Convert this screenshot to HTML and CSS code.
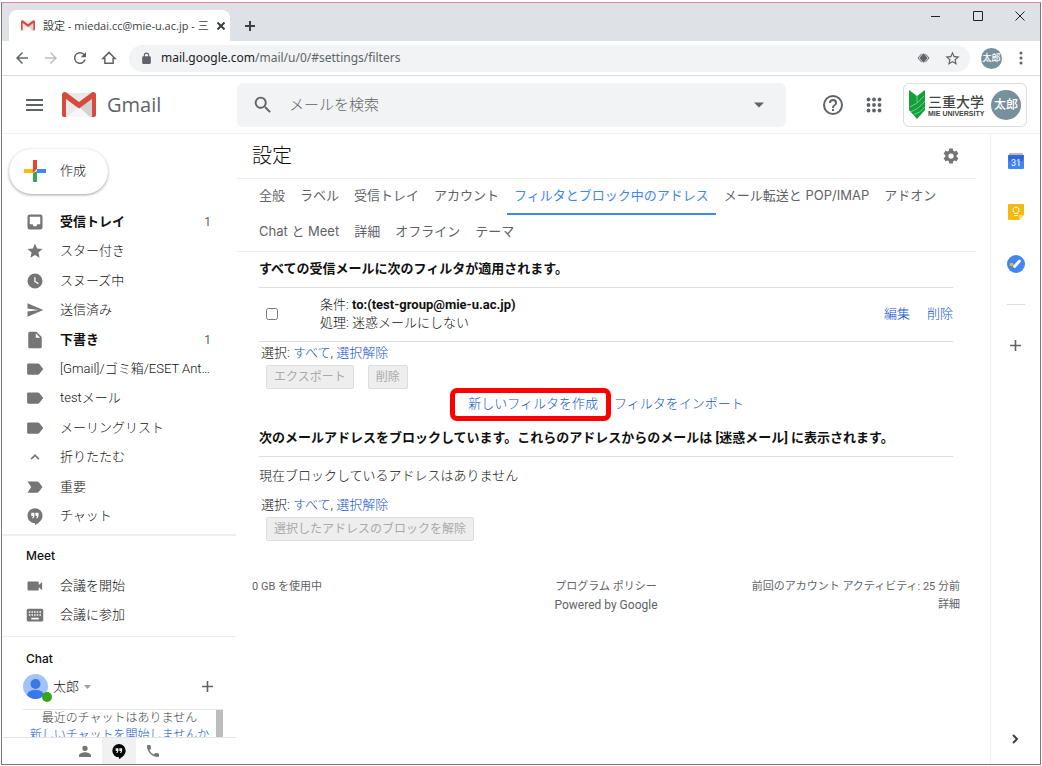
FILE: index.html
```html
<!DOCTYPE html>
<html lang="ja">
<head>
    <meta charset="UTF-8">
    <title>設定 - miedai.cc@mie-u.ac.jp</title>
    <link rel="stylesheet" href="styles.css">
</head>
<body>
<svg class="sprite" aria-hidden="true">
    <symbol id="i-label" viewBox="0 0 24 24"><path d="M3 4.500h13q1 0 1.700.9L23 12l-5.300 6.600q-.7.900-1.700.900H3Q1.500 19.500 1.500 18V6Q1.500 4.500 3 4.500z"/></symbol>
    <symbol id="i-hangout" viewBox="0 0 24 24"><path d="M12 1.500a10 10 0 0 0 0 20V24c5-2.500 10-7 10-12.500a10 10 0 0 0-10-10zM11.200 12l-1.500 3H8l1.300-3H7V7.800h4.200zm5.500 0l-1.500 3h-1.700l1.300-3h-2.300V7.800h4.200z"/></symbol>
    <symbol id="i-mail" viewBox="0 0 34 26">
        <path fill="#e9e9e9" d="M3 1h28v24H3z"/>
        <path fill="#f7f7f7" d="M5 25l12-11 12 11z"/>
        <path fill="#d3d3d3" d="M31 7v18h-3L17 15z"/>
        <path fill="#d54b3d" d="M0 3q0-3 3-3 1 0 2 1l12 9L29 1q1-1 2-1 3 0 3 3v20q0 2-2 2h-2V7L17 16.500 4 7v18H2q-2 0-2-2z"/>
    </symbol>
</svg>

<div class="window">
    <div class="tabstrip">
        <div class="browser-tab">
            <svg class="fav"><use href="#i-mail"/></svg>
            <span class="tab-title">設定 - miedai.cc@mie-u.ac.jp - 三</span>
            <button aria-label="閉じる"><svg width="8" height="8" viewBox="0 0 8 8"><path class="line2" d="M.5.500l7 7M7.500.500l-7 7"/></svg></button>
        </div>
        <button class="new-tab" aria-label="新しいタブ"><svg width="12" height="12" viewBox="0 0 12 12"><path class="line2" d="M6 1v10M1 6h10"/></svg></button>
        <div class="win-buttons">
            <button aria-label="最小化"><svg width="10" height="10" viewBox="0 0 10 10"><path class="line1" d="M0 5.500h9"/></svg></button>
            <button aria-label="最大化"><svg width="10" height="10" viewBox="0 0 10 10"><path class="line1" d="M.5.500h9v9h-9z"/></svg></button>
            <button aria-label="閉じる"><svg width="10" height="10" viewBox="0 0 10 10"><path class="line1" d="M.5.500l9 9M9.500.500l-9 9"/></svg></button>
        </div>
    </div>

    <div class="toolbar">
        <button aria-label="戻る"><svg width="18" height="18" viewBox="0 0 24 24"><path d="M20 11H7.800l5.600-5.600L12 4l-8 8 8 8 1.400-1.400L7.800 13H20z"/></svg></button>
        <button class="off" aria-label="進む"><svg width="18" height="18" viewBox="0 0 24 24"><path d="M12 4l-1.400 1.400 5.600 5.600H4v2h12.200l-5.600 5.600L12 20l8-8z"/></svg></button>
        <button aria-label="再読み込み"><svg width="18" height="18" viewBox="0 0 24 24"><path d="M17.650 6.350A8 8 0 1 0 19.730 14h-2.080A6 6 0 1 1 12 6c1.660 0 3.140.690 4.220 1.780L13 11h7V4z"/></svg></button>
        <button aria-label="ホーム"><svg width="18" height="18" viewBox="0 0 24 24"><path class="outline" d="M4 12.500l8-8 8 8h-2.500V19h-11v-6.500z"/></svg></button>
        <div class="omnibox">
            <svg width="13" height="13" viewBox="0 0 24 24"><path d="M18 8h-1V6A5 5 0 0 0 7 6v2H6a2 2 0 0 0-2 2v10c0 1.100.9 2 2 2h12a2 2 0 0 0 2-2V10a2 2 0 0 0-2-2zM9 6a3 3 0 0 1 6 0v2H9z"/></svg>
            <span class="url"><b>mail.google.com</b>/mail/u/0/#settings/filters</span>
            <svg width="13" height="12" viewBox="0 0 14 12"><path class="outline thin" d="M5 1.500L1 6l4 4.500M9 1.500L13 6l-4 4.500"/><path d="M7 1l4.500 5L7 11 2.500 6z"/></svg>
            <svg class="fav-star" width="17" height="17" viewBox="0 0 24 24"><path d="M22 9.240l-7.190-.620L12 2 9.190 8.630 2 9.240l5.460 4.730L5.820 21 12 17.270 18.180 21l-1.630-7.030zM12 15.400l-3.760 2.270 1-4.280-3.320-2.880 4.380-.380L12 6.100l1.710 4.040 4.380.380-3.320 2.880 1 4.280z"/></svg>
        </div>
        <span class="profile small">太郎</span>
        <button aria-label="メニュー"><svg width="16" height="16" viewBox="0 0 16 16"><circle cx="8" cy="3" r="1.500"/><circle cx="8" cy="8" r="1.500"/><circle cx="8" cy="13" r="1.500"/></svg></button>
    </div>

    <header class="gheader">
        <button class="burger" aria-label="メインメニュー"><svg width="18" height="12" viewBox="0 0 18 12"><path d="M0 0h17v2H0zM0 5h17v2H0zM0 10h17v2H0z"/></svg></button>
        <a class="logo" href="#"><svg width="34" height="26"><use href="#i-mail"/></svg><span>Gmail</span></a>
        <form class="search">
            <svg width="22" height="22" viewBox="0 0 24 24"><path d="M15.500 14h-.790l-.280-.270A6.500 6.500 0 1 0 13.730 14.430l.270.280v.790l5 4.990L20.490 19zM9.500 14a4.500 4.500 0 1 1 0-9 4.500 4.500 0 0 1 0 9z"/></svg>
            <input type="text" placeholder="メールを検索" aria-label="メールを検索">
            <svg width="10" height="6" viewBox="0 0 10 6"><path d="M0 .500h10L5 5.500z"/></svg>
        </form>
        <button class="help" aria-label="ヘルプ"><svg width="24" height="24" viewBox="0 0 24 24"><path d="M11 18h2v-2h-2zM12 2a10 10 0 1 0 0 20 10 10 0 0 0 0-20zm0 18a8 8 0 1 1 0-16 8 8 0 0 1 0 16zm0-14a4 4 0 0 0-4 4h2a2 2 0 1 1 4 0c0 2-3 1.750-3 5h2c0-2.250 3-2.500 3-5a4 4 0 0 0-4-4z"/></svg></button>
        <button class="apps" aria-label="アプリ"><svg width="16" height="16" viewBox="0 0 16 16"><circle cx="2.500" cy="2.500" r="1.900"/><circle cx="8" cy="2.500" r="1.900"/><circle cx="13.500" cy="2.500" r="1.900"/><circle cx="2.500" cy="8" r="1.900"/><circle cx="8" cy="8" r="1.900"/><circle cx="13.500" cy="8" r="1.900"/><circle cx="2.500" cy="13.500" r="1.900"/><circle cx="8" cy="13.500" r="1.900"/><circle cx="13.500" cy="13.500" r="1.900"/></svg></button>
        <div class="org">
            <svg width="17" height="29" viewBox="0 0 17 29"><path fill="#12a038" d="M0 0l8 6 8-6v20l-8 9-8-9z"/><path stroke="#a5dbb2" fill="none" stroke-width=".7" d="M1 17Q9 14 15 6M1 22Q10 19 16 11M4 25q7-2 12-8M8 6v6"/></svg>
            <div class="org-name"><strong>三重大学</strong><small>MIE UNIVERSITY</small></div>
            <span class="profile">太郎</span>
        </div>
    </header>

    <div class="page">
        <nav class="sidebar">
            <button class="compose">
                <svg width="22" height="22" viewBox="0 0 22 22"><path fill="#ea4335" d="M9 0h4v9l-4 4z"/><path fill="#fbbc04" d="M0 9h9v4H0z"/><path fill="#34a853" d="M9 13l4-2v11H9z"/><path fill="#4285f4" d="M13 9h9v4h-9z"/></svg>
                作成
            </button>
            <ul class="folders">
                <li><a class="unread" href="#"><svg viewBox="0 0 24 24"><path d="M19 2H5a3 3 0 0 0-3 3v14a3 3 0 0 0 3 3h14a3 3 0 0 0 3-3V5a3 3 0 0 0-3-3zm0 13h-4a3 3 0 0 1-6 0H5V5h14z"/></svg><span>受信トレイ</span><i>1</i></a></li>
                <li><a href="#"><svg viewBox="0 0 24 24"><path d="M12 17.270L18.180 21l-1.640-7.030L22 9.240l-7.190-.610L12 2 9.190 8.630 2 9.240l5.460 4.730L5.820 21z"/></svg><span>スター付き</span></a></li>
                <li><a href="#"><svg viewBox="0 0 24 24"><path d="M12 2a10 10 0 1 0 0 20 10 10 0 0 0 0-20zm4.200 14.200L11 13V7h1.700v5.200l4.300 2.600z"/></svg><span>スヌーズ中</span></a></li>
                <li><a href="#"><svg viewBox="0 0 24 24"><path d="M2 21l21-9L2 3v7l15 2-15 2z"/></svg><span>送信済み</span></a></li>
                <li><a class="unread" href="#"><svg viewBox="0 0 24 24"><path d="M5 1a2 2 0 0 0-2 2v18c0 1.100.9 2 2 2h14a2 2 0 0 0 2-2V8l-7-7zm8 8V3l6 6z"/></svg><span>下書き</span><i>1</i></a></li>
                <li><a href="#"><svg><use href="#i-label"/></svg><span>[Gmail]/ゴミ箱/ESET Antispam</span></a></li>
                <li><a href="#"><svg><use href="#i-label"/></svg><span>testメール</span></a></li>
                <li><a href="#"><svg><use href="#i-label"/></svg><span>メーリングリスト</span></a></li>
                <li><a href="#"><svg viewBox="0 0 24 24"><path fill="#777" d="M12 8l-6 6 1.600 1.600 4.400-4.400 4.400 4.400L18 14z"/></svg><span>折りたたむ</span></a></li>
                <li><a href="#"><svg viewBox="0 0 24 24"><path d="M2 4.500h13q1 0 1.800.9L22 12l-5.200 6.600q-.8.900-1.800.9H2L7 12z"/></svg><span>重要</span></a></li>
                <li><a href="#"><svg><use href="#i-hangout"/></svg><span>チャット</span></a></li>
            </ul>
            <section class="meet">
                <h2>Meet</h2>
                <a href="#"><svg viewBox="0 0 24 24"><path d="M17 10.500V7a1 1 0 0 0-1-1H3a1 1 0 0 0-1 1v10c0 .550.450 1 1 1h13a1 1 0 0 0 1-1v-3.500l4.500 4v-11z"/></svg><span>会議を開始</span></a>
                <a href="#"><svg viewBox="0 0 24 24"><path d="M21 3.500H3a2 2 0 0 0-2 2v13c0 1.100.9 2 2 2h18a2 2 0 0 0 2-2v-13a2 2 0 0 0-2-2zM10.800 7h2v2h-2zm0 4h2v2h-2zM7.300 7h2v2h-2zm0 4h2v2h-2zm-1.500 2h-2v-2h2zm0-4h-2V7h2zM17 18H7v-2.500h10zm-.7-5h-2v-2h2zm0-4h-2V7h2zm3.700 4h-2v-2h2zm0-4h-2V7h2z"/></svg><span>会議に参加</span></a>
            </section>
            <section class="chat">
                <h2>Chat</h2>
                <div class="me">
                    <div class="avatar">
                        <svg width="25" height="25" viewBox="0 0 25 25"><circle cx="12.500" cy="12.500" r="12.500" fill="#a1c2fa"/><circle cx="12.500" cy="10" r="5" fill="#3b78e7"/><path fill="#3b78e7" d="M4 21q1-5 8.500-5t8.500 5q-3.500 4-8.500 4T4 21z"/></svg>
                        <span class="online"></span>
                    </div>
                    太郎
                    <svg class="caret" width="7" height="4" viewBox="0 0 7 4"><path d="M0 0h7L3.500 4z"/></svg>
                    <button aria-label="チャットを開始"><svg width="11" height="11" viewBox="0 0 11 11"><path d="M4.700 0h1.600v4.700H11v1.600H6.300V11H4.700V6.300H0V4.700h4.700z"/></svg></button>
                </div>
                <div class="chat-list">
                    <div>最近のチャットはありません<a href="#">新しいチャットを開始しませんか</a></div>
                    <span class="thumb"></span>
                </div>
            </section>
            <div class="chat-tabs">
                <button aria-label="連絡先"><svg viewBox="0 0 24 24"><path d="M12 12a4 4 0 1 0 0-8 4 4 0 0 0 0 8zm0 2c-3 0-9 1.500-9 5v2h18v-2c0-3.500-6-5-9-5z"/></svg></button>
                <button class="on" aria-label="ハングアウト"><svg><use href="#i-hangout"/></svg></button>
                <button aria-label="電話"><svg viewBox="0 0 24 24"><path d="M6.620 10.790a15 15 0 0 0 6.590 6.590l2.200-2.200a1 1 0 0 1 1.020-.240c1.120.370 2.330.570 3.570.570.550 0 1 .450 1 1V20a1 1 0 0 1-1 1A17 17 0 0 1 3 4a1 1 0 0 1 1-1h3.500a1 1 0 0 1 1 1c0 1.250.2 2.450.570 3.570a1 1 0 0 1-.250 1.020z"/></svg></button>
            </div>
        </nav>

        <main>
            <div class="title-row">
                <h1>設定</h1>
                <button aria-label="設定"><svg width="18" height="18" viewBox="0 0 24 24"><path d="M19.430 12.980c.040-.320.070-.640.070-.980s-.030-.660-.070-.980l2.110-1.650a.5.500 0 0 0 .120-.640l-2-3.460a.5.500 0 0 0-.610-.220l-2.490 1a7.300 7.300 0 0 0-1.690-.980l-.380-2.650A.490.490 0 0 0 14 2h-4a.490.490 0 0 0-.490.420l-.380 2.650c-.610.250-1.170.590-1.690.980l-2.490-1a.49.490 0 0 0-.610.220l-2 3.460a.49.490 0 0 0 .120.640l2.110 1.650c-.040.320-.070.650-.070.980s.030.660.070.980l-2.110 1.650a.5.500 0 0 0-.120.640l2 3.460c.120.220.390.300.610.220l2.490-1c.52.400 1.080.730 1.690.980l.380 2.650c.030.240.240.420.490.420h4c.250 0 .460-.180.490-.420l.380-2.650a7.700 7.700 0 0 0 1.690-.980l2.490 1c.230.090.490 0 .610-.220l2-3.460a.5.500 0 0 0-.120-.640zM12 15.500a3.500 3.500 0 1 1 0-7 3.500 3.500 0 0 1 0 7z"/></svg></button>
            </div>
            <nav class="tabs">
                <a href="#">全般</a><a href="#">ラベル</a><a href="#">受信トレイ</a><a href="#">アカウント</a><a class="current" href="#">フィルタとブロック中のアドレス</a><a href="#">メール転送と POP/IMAP</a><a href="#">アドオン</a><a href="#">Chat と Meet</a><a href="#">詳細</a><a href="#">オフライン</a><a href="#">テーマ</a>
            </nav>

            <div class="settings">
                <h3>すべての受信メールに次のフィルタが適用されます。</h3>
                <table class="filters">
                    <tr>
                        <td class="check"><input type="checkbox" id="f1"></td>
                        <td><label for="f1">条件: <b>to:(test-group@mie-u.ac.jp)</b><br>処理: 迷惑メールにしない</label></td>
                        <td class="ops"><a href="#">編集</a><a href="#">削除</a></td>
                    </tr>
                </table>
                <p class="select">選択: <a href="#">すべて</a>, <a href="#">選択解除</a></p>
                <div class="buttons"><button disabled>エクスポート</button><button disabled>削除</button></div>
                <div class="create"><a class="marked" href="#">新しいフィルタを作成</a><a href="#">フィルタをインポート</a></div>
                <h3 class="blocked">次のメールアドレスをブロックしています。これらのアドレスからのメールは [迷惑メール] に表示されます。</h3>
                <p class="none">現在ブロックしているアドレスはありません</p>
                <p class="select">選択: <a href="#">すべて</a>, <a href="#">選択解除</a></p>
                <div class="buttons"><button disabled>選択したアドレスのブロックを解除</button></div>
            </div>

            <footer>
                <div>0 GB を使用中</div>
                <div class="center"><a href="#">プログラム ポリシー</a><p class="powered">Powered by Google</p></div>
                <div class="right">前回のアカウント アクティビティ: 25 分前<br><a href="#">詳細</a></div>
            </footer>
        </main>

        <aside>
            <a href="#" aria-label="カレンダー"><svg width="16" height="16" viewBox="0 0 16 16"><path fill="#bdbdbd" d="M1 0h14v3H1z"/><path fill="#4285f4" d="M0 3h16v12q0 1-1 1H1q-1 0-1-1z"/><path fill="#3367d6" d="M0 2h16l-1 6H1z"/><text x="8" y="13" text-anchor="middle">31</text></svg></a>
            <a href="#" aria-label="Keep"><svg width="16" height="16" viewBox="0 0 16 16"><path fill="#f5b912" d="M1 0h14q1 0 1 1v10l-5 5H1q-1 0-1-1V1q0-1 1-1z"/><path fill="#fdd663" d="M16 11l-5 5v-5z"/><path fill="none" stroke="#fff" d="M6.500 9.500V8.700a3 3 0 1 1 3 0v.8zM6.500 11.500h3"/></svg></a>
            <a href="#" aria-label="ToDo リスト"><svg width="18" height="18" viewBox="0 0 18 18"><circle cx="9" cy="9" r="9" fill="#4285f4"/><path stroke="#fff" stroke-width="2.800" stroke-linecap="round" d="M7.500 11.500l5-5.500"/><circle cx="4.500" cy="9.500" r="1.800" fill="#fbbc04"/></svg></a>
            <hr>
            <button aria-label="アドオンを取得"><svg width="11" height="11" viewBox="0 0 11 11"><path d="M4.700 0h1.600v4.700H11v1.600H6.300V11H4.700V6.300H0V4.700h4.700z"/></svg></button>
            <button class="hide" aria-label="サイドパネルを非表示"><svg width="8" height="10" viewBox="0 0 8 10"><path class="line2" d="M1 1l4 4-4 4"/></svg></button>
        </aside>
    </div>
</div>
</body>
</html>
```
FILE: styles.css
```css
* {
    margin: 0;
    padding: 0;
    box-sizing: border-box;
}

body {
    font: 13px/18px Roboto, "Noto Sans CJK JP", sans-serif;
    color: #111;
    background: #fff;
}

ul {
    list-style: none;
}

a {
    color: #15c;
    text-decoration: none;
}

b {
    font-weight: bold;
}

button {
    border: 0;
    background: none;
    font: inherit;
    color: inherit;
}

svg {
    display: block;
    flex: none;
    fill: #5f6368;
}

.sprite {
    position: absolute;
    width: 0;
    height: 0;
}

.line1, .line2, .outline {
    fill: none;
    stroke: #202124;
}

.line2 {
    stroke-width: 2;
    stroke: #3c4043;
}

.outline {
    stroke: #5f6368;
    stroke-width: 2;
}

.thin {
    stroke-width: 1;
}

.window {
    display: flex;
    flex-direction: column;
    min-height: calc(100vh - 3px);
    margin: 2px 1px 1px;
    border: 1px solid #777;
    border-top-color: #e8829c;
}

/* browser frame */
.tabstrip {
    display: flex;
    align-items: center;
    height: 38px;
    padding-left: 7px;
    background: #dee1e6;
}

.browser-tab {
    display: flex;
    align-items: center;
    align-self: flex-end;
    gap: 8px;
    width: 221px;
    height: 31px;
    padding: 0 11px 0 12px;
    border-radius: 8px 8px 0 0;
    background: #fff;
}

.fav {
    width: 14px;
    height: 11px;
}

.tab-title {
    flex: 1;
    white-space: nowrap;
    font: 11px/18px "Open Sans", "Noto Sans CJK JP", sans-serif;
    color: #3c4043;
}

.new-tab {
    margin: 8px 0 0 14px;
}

.win-buttons {
    display: flex;
    gap: 32px;
    margin: 0 15px 12px auto;
}

.toolbar {
    display: flex;
    align-items: center;
    gap: 11px;
    height: 35px;
    padding: 0 11px;
    border-bottom: 1px solid #dadce0;
}

.off {
    opacity: .4;
}

.omnibox {
    display: flex;
    flex: 1;
    align-items: center;
    gap: 8px;
    height: 27px;
    padding: 0 9px 0 11px;
    border-radius: 14px;
    background: #f1f3f4;
}

.url {
    flex: 1;
    font: 12px/18px "Noto Sans", sans-serif;
    color: #5f6368;
}

.url b {
    font-weight: normal;
    color: #202124;
}

.fav-star {
    margin-left: 6px;
}

.profile {
    display: grid;
    place-items: center;
    flex: none;
    width: 30px;
    height: 30px;
    border-radius: 50%;
    background: #78909c;
    color: #fff;
    font-size: 12px;
    font-weight: 500;
}

.profile.small {
    width: 21px;
    height: 21px;
    font-size: 9px;
}

/* gmail header */
.gheader {
    display: flex;
    align-items: center;
    height: 58px;
    padding: 0 13px 0 24px;
    border-bottom: 1px solid #f1f1f1;
}

.logo {
    display: flex;
    align-items: center;
    gap: 11px;
    width: 175px;
    margin-left: 18px;
    font: 20px/26px "Open Sans", sans-serif;
    color: #5f6368;
}

.search {
    display: flex;
    flex: 1;
    align-items: center;
    gap: 15px;
    height: 44px;
    padding: 0 22px 0 15px;
    border-radius: 6px;
    background: #f1f3f4;
}

.search input {
    flex: 1;
    min-width: 0;
    border: 0;
    background: none;
    font: 300 15px/24px Roboto, "Noto Sans CJK JP", sans-serif;
}

.search input::placeholder {
    color: #5f6368;
}

.help {
    margin-left: 35px;
}

.apps {
    margin: 0 21px;
}

.org {
    display: flex;
    align-items: center;
    height: 44px;
    padding: 0 5px;
    border: 1px solid #dadce0;
    border-radius: 6px;
}

.org-name {
    display: flex;
    flex-direction: column;
    width: 56px;
    margin: 0 7px 0 2px;
    white-space: nowrap;
    color: #444;
}

.org-name strong {
    font: 500 14px/18px "Noto Sans CJK JP", sans-serif;
}

.org-name small {
    font: bold 7px/8px "Liberation Sans", sans-serif;
}

.page {
    display: flex;
    flex: 1;
}

/* left column */
.sidebar {
    display: flex;
    flex-direction: column;
    width: 235px;
    padding-right: 1px;
    font-weight: 300;
}

.compose {
    display: flex;
    align-items: center;
    align-self: flex-start;
    gap: 14px;
    height: 45px;
    margin: 15px 0 0 7px;
    padding: 0 22px 1px 15px;
    border-radius: 23px;
    box-shadow: 0 1px 2px rgba(60, 64, 67, .3), 0 1px 3px 1px rgba(60, 64, 67, .15);
}

.folders {
    display: grid;
    grid-template-columns: minmax(0, 1fr);
    grid-auto-rows: 1fr;
    min-height: 324px;
    margin-top: 13px;
    padding-right: 25px;
}

.folders a, .meet a {
    display: flex;
    align-items: center;
    gap: 16px;
    height: 100%;
    padding-left: 24px;
    color: #111;
}

.folders svg, .meet svg {
    width: 18px;
    height: 18px;
    fill: #757575;
}

.folders span {
    flex: 1;
    overflow: hidden;
    white-space: nowrap;
    text-overflow: ellipsis;
}

.folders i {
    font: 12px/18px Roboto, sans-serif;
    color: #5f6368;
}

.folders .unread {
    font-weight: bold;
}

.sidebar h2 {
    padding-left: 24px;
    font: 500 12px/20px Inter, sans-serif;
}

.meet {
    margin-top: 3px;
    padding: 10px 0 7px;
    border-top: 2px solid #eee;
}

.meet h2 {
    margin-bottom: 5px;
}

.meet a {
    height: 29px;
}

.chat {
    display: flex;
    flex: 1;
    flex-direction: column;
    padding: 12px 13px 0 21px;
    border-top: 1px solid #eee;
}

.sidebar .chat h2 {
    padding-left: 3px;
}

.me {
    display: flex;
    align-items: center;
    gap: 5px;
    height: 41px;
    padding-bottom: 5px;
    border-bottom: 1px solid #e5e5e5;
}

.avatar {
    position: relative;
}

.online {
    position: absolute;
    right: -4px;
    bottom: -3px;
    width: 10px;
    height: 10px;
    border-radius: 50%;
    background: #34a51d;
}

.caret {
    opacity: .6;
}

.me button {
    margin: 0 10px 0 auto;
}

.chat-list {
    display: flex;
    height: 27px;
    overflow: hidden;
    line-height: 17px;
    color: #444;
}

.chat-list div {
    flex: 1;
    text-align: center;
    white-space: nowrap;
    font-size: 12px;
}

.chat-list a {
    display: block;
}

.thumb {
    width: 7px;
    background: #bdbdbd;
}

.chat-tabs {
    display: flex;
    justify-content: center;
    height: 27px;
    border-top: 1px solid #e5e5e5;
}

.chat-tabs button {
    display: grid;
    place-items: center;
    width: 34px;
}

.chat-tabs svg {
    width: 16px;
    height: 16px;
    fill: #757575;
}

.chat-tabs .on {
    background: #f1f1f1;
}

.chat-tabs .on svg {
    fill: #000;
}

/* settings */
main {
    flex: 1;
    padding-right: 14px;
    font-weight: 300;
}

.title-row {
    display: flex;
    align-items: center;
    justify-content: space-between;
    height: 45px;
    padding: 0 16px 1px 15px;
    border-bottom: 1px solid #eee;
}

h1 {
    font-size: 20px;
    line-height: 28px;
    font-weight: 300;
}

.title-row svg {
    fill: #757575;
}

.tabs {
    display: flex;
    flex-wrap: wrap;
    column-gap: 1px;
    padding-left: 15px;
    border-bottom: 1px solid #eee;
}

.tabs a {
    height: 36px;
    padding: 0 7px;
    line-height: 32px;
    color: #5f6368;
    font-family: Inter, "Noto Sans CJK JP", sans-serif;
    font-weight: 400;
}

.tabs .current {
    border-bottom: 2px solid #4285f4;
    color: #4285f4;
}

.settings {
    padding: 8px 23px 0 22px;
}

h3 {
    padding-bottom: 9px;
    border-bottom: 1px solid #ddd;
    font-size: 13px;
    line-height: 18px;
}

.filters {
    width: 100%;
    border-collapse: collapse;
    border-bottom: 1px solid #ddd;
}

.filters td {
    padding: 8px 0 9px;
}

.filters .check {
    width: 61px;
    padding-left: 7px;
}

.check input {
    display: block;
    width: 12px;
    height: 12px;
}

.ops {
    text-align: right;
}

.ops a {
    margin-left: 17px;
}

.select {
    padding: 2px 2px 0;
}

.buttons {
    display: flex;
    gap: 14px;
    padding: 3px 7px 0;
}

.buttons button {
    height: 24px;
    padding: 0 7px;
    border: 1px solid #ddd;
    border-radius: 2px;
    background: #eee;
    color: #aaa;
    font-size: 12px;
    font-weight: 400;
}

.create {
    display: flex;
    justify-content: center;
    gap: 16px;
    padding: 6px 0 8px;
}

.marked {
    position: relative;
}

/* red frame round the link */
.marked::after {
    content: "";
    position: absolute;
    inset: -7px -13px -8px -18px;
    border: 5px solid #f00;
    border-radius: 7px;
}

.blocked {
    padding-top: 8px;
}

.none {
    padding: 10px 0 9px;
}

footer {
    display: grid;
    grid-template-columns: 1fr 1fr 1fr;
    padding: 37px 16px 0 15px;
    font-size: 11px;
    font-weight: 400;
    color: #5f6368;
}

footer a {
    color: inherit;
}

.powered {
    font-size: 12px;
}

.center {
    text-align: center;
}

.right {
    text-align: right;
    white-space: nowrap;
}

/* side panel */
aside {
    display: flex;
    flex-direction: column;
    align-items: center;
    width: 50px;
    padding: 19px 0 20px;
    border-left: 1px solid #f1f1f1;
}

aside a {
    margin-bottom: 35px;
}

aside text {
    font: 9px Roboto, sans-serif;
    fill: #fff;
}

aside hr {
    width: 18px;
    margin: -4px 0 35px;
    border: 0;
    border-top: 1px solid #ddd;
}

.hide {
    margin-top: auto;
}
```
